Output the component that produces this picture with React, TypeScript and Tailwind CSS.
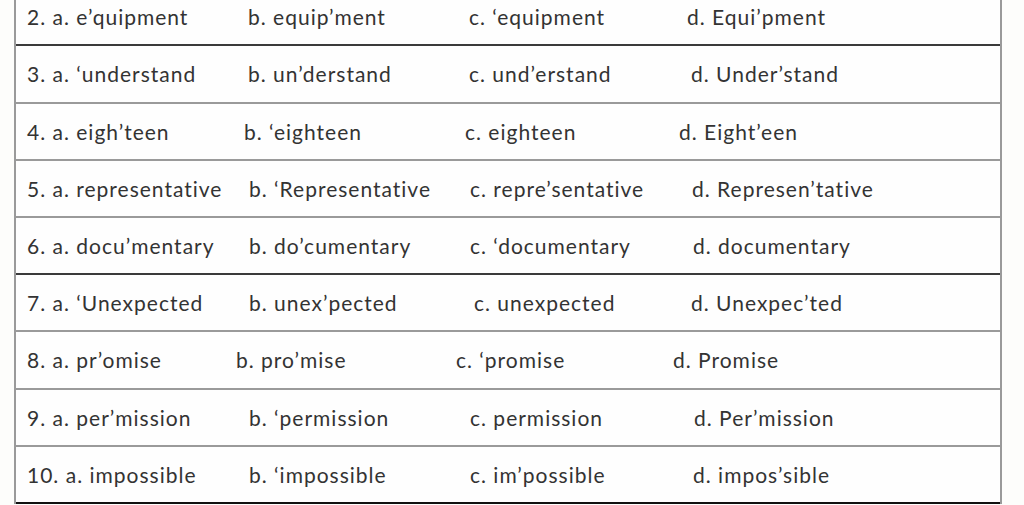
type Row = {
  cells: [string, string, string, string];
  widths: [number, number, number];
  h: string;
  line: string;
};

const rows: Row[] = [
  { cells: ['2. a. e\u2019quipment', 'b. equip\u2019ment', 'c. \u2018equipment', 'd. Equi\u2019pment'], widths: [221, 221, 218], h: 'h-[57px]', line: 'border-[#3a3a3a]' },
  { cells: ['3. a. \u2018understand', 'b. un\u2019derstand', 'c. und\u2019erstand', 'd. Under\u2019stand'], widths: [221, 221, 222], h: 'h-[58px]', line: 'border-[#9a9a9a]' },
  { cells: ['4. a. eigh\u2019teen', 'b. \u2018eighteen', 'c. eighteen', 'd. Eight\u2019een'], widths: [217, 221, 214], h: 'h-[57px]', line: 'border-[#9a9a9a]' },
  { cells: ['5. a. representative', 'b. \u2018Representative', 'c. repre\u2019sentative', 'd. Represen\u2019tative'], widths: [222, 221, 222], h: 'h-[57px]', line: 'border-[#9a9a9a]' },
  { cells: ['6. a. docu\u2019mentary', 'b. do\u2019cumentary', 'c. \u2018documentary', 'd. documentary'], widths: [222, 221, 223], h: 'h-[57px]', line: 'border-[#3a3a3a]' },
  { cells: ['7. a. \u2018Unexpected', 'b. unex\u2019pected', 'c. unexpected', 'd. Unexpec\u2019ted'], widths: [222, 225, 217], h: 'h-[57px]', line: 'border-[#9a9a9a]' },
  { cells: ['8. a. pr\u2019omise', 'b. pro\u2019mise', 'c. \u2018promise', 'd. Promise'], widths: [209, 220, 217], h: 'h-[58px]', line: 'border-[#9a9a9a]' },
  { cells: ['9. a. per\u2019mission', 'b. \u2018permission', 'c. permission', 'd. Per\u2019mission'], widths: [222, 221, 224], h: 'h-[57px]', line: 'border-[#9a9a9a]' },
  { cells: ['10. a. impossible', 'b. \u2018impossible', 'c. im\u2019possible', 'd. impos\u2019sible'], widths: [222, 221, 223], h: 'h-[57px]', line: 'border-[#111111]' },
];

export default function App() {
  return (
    <div className="h-[505px] w-[1024px] overflow-hidden bg-[#fdfdfb]">
      <div
        className="-mt-[11px] ml-[14px] w-[988px] border-x-2 border-[#9a9a9a] bg-[#fefefe] text-[21px] tracking-[1px] text-[#333333]"
        style={{ fontFamily: 'Lato, "Open Sans", sans-serif' }}
      >
        {rows.map((row, i) => (
          <div key={i} className={`flex items-center border-b-2 pl-[11px] ${row.h} ${row.line}`}>
            {row.cells.map((cell, j) => (
              <span
                key={j}
                className="shrink-0 whitespace-nowrap"
                style={j < 3 ? { width: row.widths[j] } : undefined}
              >
                {cell}
              </span>
            ))}
          </div>
        ))}
      </div>
    </div>
  );
}
